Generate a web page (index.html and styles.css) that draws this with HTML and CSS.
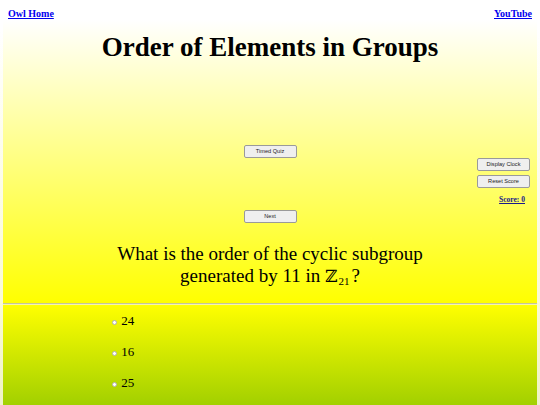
FILE: index.html
```html
<!DOCTYPE html>
<html lang="en">
<head>
  <meta charset="UTF-8">
  <meta name="viewport" content="width=device-width, initial-scale=1.0">
  <title>Order of Elements in Groups</title>
  <link rel="stylesheet" href="styles.css">
</head>
<body>

  <div class="top-links">
    <a href="#">Owl Home</a>
    <a href="#">YouTube</a>
  </div>

  <div class="quiz-head">
    <h1>Order of Elements in Groups</h1>

    <button class="btn" id="timed">Timed Quiz</button>

    <div class="controls">
      <button class="btn" id="clock">Display Clock</button>
      <button class="btn" id="reset">Reset Score</button>
      <a href="#" class="score" id="score">Score: 0</a>
    </div>

    <button class="btn" id="next">Next</button>

    <p class="question">
      What is the order of the cyclic subgroup generated by 11 in <span class="math"><span class="bb">&#8484;</span><span class="sub">21</span></span>?
    </p>
  </div>

  <hr class="divider">

  <div class="answers">
    <label class="choice"><input type="radio" name="ans" value="24"> 24</label>
    <label class="choice"><input type="radio" name="ans" value="16"> 16</label>
    <label class="choice"><input type="radio" name="ans" value="25"> 25</label>
  </div>

</body>
</html>
```

FILE: styles.css
```css
html, body {
  margin: 0;
  padding: 0;
}

body {
  font-family: "Liberation Serif", "DejaVu Serif", serif;
  background: linear-gradient(#fff 30px, #fafad6 300px, #eef2c6 405px);
  min-height: 405px;
}

.top-links {
  display: flex;
  justify-content: space-between;
  padding: 8px 8px 0;
  font-size: 10px;
  font-weight: bold;
  line-height: 11.5px;
}

.top-links a {
  color: #0000ee;
}

.quiz-head {
  margin: 0 3px;
  display: flex;
  flex-direction: column;
  align-items: center;
  padding-bottom: 16px;
  background: linear-gradient(#fff 0, #ffff00 100%);
}

h1 {
  margin: 12px 0 0;
  font-size: 27px;
  line-height: 31px;
  font-weight: bold;
}

.btn {
  width: 53px;
  height: 13px;
  padding: 0;
  font-family: "Liberation Sans", Arial, sans-serif;
  font-size: 5.6px;
  color: #222;
  background: #efefef;
  border: 1px solid #9a9a9a;
  border-radius: 2px;
}

#timed {
  margin-top: 82px;
}

.controls {
  align-self: flex-end;
  display: flex;
  flex-direction: column;
  align-items: flex-end;
  gap: 4px;
  margin-right: 7px;
}

.score {
  margin: 3px 5px 0 0;
  font-size: 7.5px;
  line-height: 9px;
  font-weight: bold;
  color: #1a1a8c;
}

#next {
  margin-top: 6px;
}

.question {
  margin: 20px 0 0;
  max-width: 330px;
  text-align: center;
  font-size: 19px;
  line-height: 22px;
}

.question .math {
  display: inline-flex;
  align-items: baseline;
  gap: 1px;
  margin-right: 2px;
  white-space: nowrap;
}

.question .bb {
  font-family: "DejaVu Serif", serif;
  font-size: 17px;
  line-height: 20px;
}

.question .sub {
  font-size: 11px;
  line-height: 12px;
  position: relative;
  top: 3px;
}

.divider {
  margin: 0 3px;
  height: 0;
  border: none;
  border-top: 1px solid #c4c49a;
  border-bottom: 1px solid #f4f4b0;
}

.answers {
  margin: 0 3px;
  min-height: 100px;
  padding-left: 109px;
  background: linear-gradient(#ffff00 0, #a2d000 100px);
  display: flex;
  flex-direction: column;
}

.choice {
  font-size: 13px;
  line-height: 31px;
}

.choice input {
  appearance: none;
  width: 5px;
  height: 5px;
  margin: 0 1px 0 0;
  border: 1px solid #b0b0b0;
  border-radius: 50%;
  background: #fff;
  vertical-align: baseline;
}
```
